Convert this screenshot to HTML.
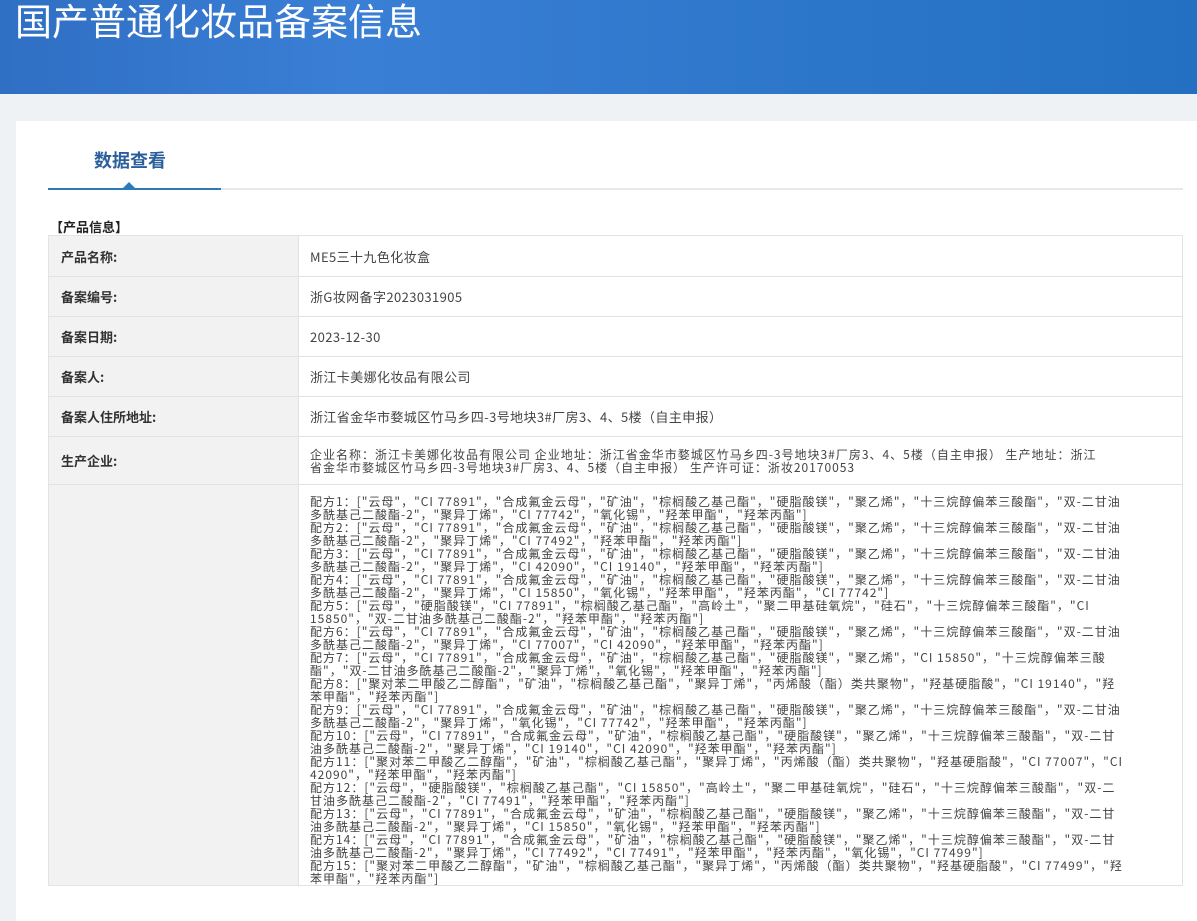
<!DOCTYPE html>
<html><head><meta charset="utf-8"><style>
*{margin:0;padding:0;box-sizing:border-box}
body{width:1197px;height:896px;overflow:hidden;background:#eef2f5;font-family:"Liberation Sans","Microsoft YaHei","Noto Sans CJK SC",sans-serif;color:#333}
.hd{position:absolute;left:0;top:0;width:1197px;height:94px;background:linear-gradient(90deg,#2f6fc4 0%,#3a7fd6 30%,#2f78cc 60%,#2370c2 100%)}
.hd h1{position:absolute;left:15px;top:-8px;font-size:37px;font-weight:normal;color:#fff;font-family:"Noto Sans CJK SC",sans-serif}
.card{position:absolute;left:16px;top:121px;width:1181px;height:800px;background:#fff}
.tab{position:absolute;left:94px;top:147px;font-size:18px;font-weight:bold;color:#2b5f9c;font-family:"Noto Sans CJK SC",sans-serif}
.line{position:absolute;left:48px;top:188px;width:1135px;height:2px;background:#e6e8ea}
.line2{position:absolute;left:48px;top:188px;width:173px;height:2px;background:#2e7ab8}
.tri{position:absolute;left:123px;top:182px;width:0;height:0;border-left:6px solid transparent;border-right:6px solid transparent;border-bottom:6px solid #2e7ab8}
.sec{position:absolute;left:50px;top:217px;font-size:13px;font-weight:bold;color:#222;font-family:"Noto Sans CJK SC",sans-serif}
table{position:absolute;left:48px;top:235px;width:1135px;border-collapse:collapse;border:1px solid #b9c9d9}
td{border:1px solid #e3e3e3;font-size:13px;vertical-align:middle;font-family:"Noto Sans CJK SC",sans-serif}
td.l{width:250px;background:#f2f2f2;font-weight:bold;padding-left:12px;color:#333}
td.r{padding-left:11px;color:#444;letter-spacing:0.4px}
.p{font-size:12px !important;line-height:13px;letter-spacing:1px !important}
.f{line-height:13px;padding-top:10px;vertical-align:top;color:#444}
</style></head><body>
<div class="hd"><h1>国产普通化妆品备案信息</h1></div>
<div class="card"></div>
<div class="tab">数据查看</div>
<div class="line"></div><div class="line2"></div><div class="tri"></div>
<div class="sec">【产品信息】</div>
<table>
<tr style="height:41px"><td class="l">产品名称:</td><td class="r">ME5三十九色化妆盒</td></tr>
<tr style="height:40px"><td class="l">备案编号:</td><td class="r">浙G妆网备字2023031905</td></tr>
<tr style="height:40px"><td class="l">备案日期:</td><td class="r">2023-12-30</td></tr>
<tr style="height:40px"><td class="l">备案人:</td><td class="r">浙江卡美娜化妆品有限公司</td></tr>
<tr style="height:40px"><td class="l">备案人住所地址:</td><td class="r">浙江省金华市婺城区竹马乡四-3号地块3#厂房3、4、5楼（自主申报）</td></tr>
<tr style="height:48px"><td class="l">生产企业:</td><td class="r p">企业名称：浙江卡美娜化妆品有限公司 企业地址：浙江省金华市婺城区竹马乡四-3号地块3#厂房3、4、5楼（自主申报） 生产地址：浙江<br>省金华市婺城区竹马乡四-3号地块3#厂房3、4、5楼（自主申报） 生产许可证：浙妆20170053</td></tr>
<tr><td class="l"></td><td class="r p f">
配方1：["云母"，"CI 77891"，"合成氟金云母"，"矿油"，"棕榈酸乙基己酯"，"硬脂酸镁"，"聚乙烯"，"十三烷醇偏苯三酸酯"，"双-二甘油<br>多酰基己二酸酯-2"，"聚异丁烯"，"CI 77742"，"氧化锡"，"羟苯甲酯"，"羟苯丙酯"]<br>
配方2：["云母"，"CI 77891"，"合成氟金云母"，"矿油"，"棕榈酸乙基己酯"，"硬脂酸镁"，"聚乙烯"，"十三烷醇偏苯三酸酯"，"双-二甘油<br>多酰基己二酸酯-2"，"聚异丁烯"，"CI 77492"，"羟苯甲酯"，"羟苯丙酯"]<br>
配方3：["云母"，"CI 77891"，"合成氟金云母"，"矿油"，"棕榈酸乙基己酯"，"硬脂酸镁"，"聚乙烯"，"十三烷醇偏苯三酸酯"，"双-二甘油<br>多酰基己二酸酯-2"，"聚异丁烯"，"CI 42090"，"CI 19140"，"羟苯甲酯"，"羟苯丙酯"]<br>
配方4：["云母"，"CI 77891"，"合成氟金云母"，"矿油"，"棕榈酸乙基己酯"，"硬脂酸镁"，"聚乙烯"，"十三烷醇偏苯三酸酯"，"双-二甘油<br>多酰基己二酸酯-2"，"聚异丁烯"，"CI 15850"，"氧化锡"，"羟苯甲酯"，"羟苯丙酯"，"CI 77742"]<br>
配方5：["云母"，"硬脂酸镁"，"CI 77891"，"棕榈酸乙基己酯"，"高岭土"，"聚二甲基硅氧烷"，"硅石"，"十三烷醇偏苯三酸酯"，"CI<br>15850"，"双-二甘油多酰基己二酸酯-2"，"羟苯甲酯"，"羟苯丙酯"]<br>
配方6：["云母"，"CI 77891"，"合成氟金云母"，"矿油"，"棕榈酸乙基己酯"，"硬脂酸镁"，"聚乙烯"，"十三烷醇偏苯三酸酯"，"双-二甘油<br>多酰基己二酸酯-2"，"聚异丁烯"，"CI 77007"，"CI 42090"，"羟苯甲酯"，"羟苯丙酯"]<br>
配方7：["云母"，"CI 77891"，"合成氟金云母"，"矿油"，"棕榈酸乙基己酯"，"硬脂酸镁"，"聚乙烯"，"CI 15850"，"十三烷醇偏苯三酸<br>酯"，"双-二甘油多酰基己二酸酯-2"，"聚异丁烯"，"氧化锡"，"羟苯甲酯"，"羟苯丙酯"]<br>
配方8：["聚对苯二甲酸乙二醇酯"，"矿油"，"棕榈酸乙基己酯"，"聚异丁烯"，"丙烯酸（酯）类共聚物"，"羟基硬脂酸"，"CI 19140"，"羟<br>苯甲酯"，"羟苯丙酯"]<br>
配方9：["云母"，"CI 77891"，"合成氟金云母"，"矿油"，"棕榈酸乙基己酯"，"硬脂酸镁"，"聚乙烯"，"十三烷醇偏苯三酸酯"，"双-二甘油<br>多酰基己二酸酯-2"，"聚异丁烯"，"氧化锡"，"CI 77742"，"羟苯甲酯"，"羟苯丙酯"]<br>
配方10：["云母"，"CI 77891"，"合成氟金云母"，"矿油"，"棕榈酸乙基己酯"，"硬脂酸镁"，"聚乙烯"，"十三烷醇偏苯三酸酯"，"双-二甘<br>油多酰基己二酸酯-2"，"聚异丁烯"，"CI 19140"，"CI 42090"，"羟苯甲酯"，"羟苯丙酯"]<br>
配方11：["聚对苯二甲酸乙二醇酯"，"矿油"，"棕榈酸乙基己酯"，"聚异丁烯"，"丙烯酸（酯）类共聚物"，"羟基硬脂酸"，"CI 77007"，"CI<br>42090"，"羟苯甲酯"，"羟苯丙酯"]<br>
配方12：["云母"，"硬脂酸镁"，"棕榈酸乙基己酯"，"CI 15850"，"高岭土"，"聚二甲基硅氧烷"，"硅石"，"十三烷醇偏苯三酸酯"，"双-二<br>甘油多酰基己二酸酯-2"，"CI 77491"，"羟苯甲酯"，"羟苯丙酯"]<br>
配方13：["云母"，"CI 77891"，"合成氟金云母"，"矿油"，"棕榈酸乙基己酯"，"硬脂酸镁"，"聚乙烯"，"十三烷醇偏苯三酸酯"，"双-二甘<br>油多酰基己二酸酯-2"，"聚异丁烯"，"CI 15850"，"氧化锡"，"羟苯甲酯"，"羟苯丙酯"]<br>
配方14：["云母"，"CI 77891"，"合成氟金云母"，"矿油"，"棕榈酸乙基己酯"，"硬脂酸镁"，"聚乙烯"，"十三烷醇偏苯三酸酯"，"双-二甘<br>油多酰基己二酸酯-2"，"聚异丁烯"，"CI 77492"，"CI 77491"，"羟苯甲酯"，"羟苯丙酯"，"氧化锡"，"CI 77499"]<br>
配方15：["聚对苯二甲酸乙二醇酯"，"矿油"，"棕榈酸乙基己酯"，"聚异丁烯"，"丙烯酸（酯）类共聚物"，"羟基硬脂酸"，"CI 77499"，"羟<br>苯甲酯"，"羟苯丙酯"]<br>
</td></tr>
</table>
</body></html>
